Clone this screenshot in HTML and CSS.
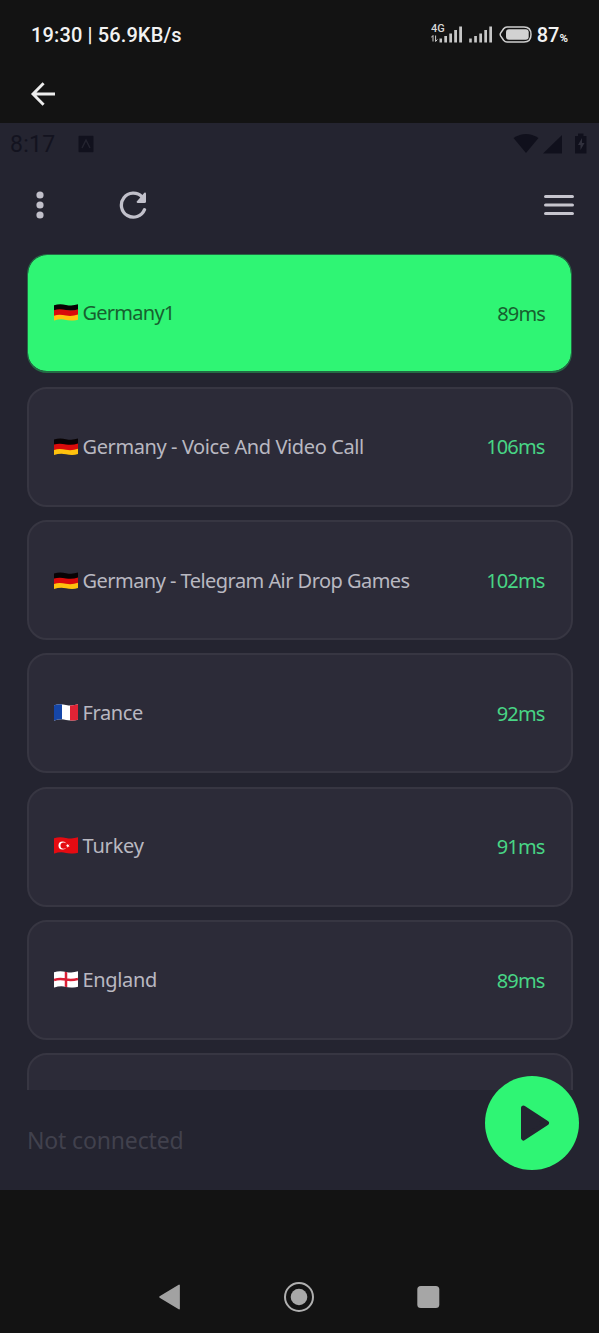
FILE: index.html
```
<!DOCTYPE html>
<html lang="en">
<head>
<meta charset="utf-8">
<title>Servers</title>
<link rel="stylesheet" href="styles.css">
</head>
<body>
<svg class="defs" aria-hidden="true">
  <defs>
    <clipPath id="wave"><path d="M0 1.600C4 .2 8 .4 12 1.200S20 2 24 .6V16C20 17.400 16 17.200 12 16.200S4 15.600 0 17Z"/></clipPath>
    <symbol id="de" viewBox="0 0 24 18"><g clip-path="url(#wave)"><path fill="#080304" d="M0 0H24V7H0Z"/><path fill="#d90b0b" d="M0 6.600C4 5.200 8 5.600 12 6.400S20 7 24 5.600V13H0Z"/><path fill="#ffc20e" d="M0 12C4 10.600 8 11 12 11.800S20 12.200 24 10.800V18H0Z"/></g></symbol>
    <symbol id="fr" viewBox="0 0 24 18"><g clip-path="url(#wave)"><path fill="#fff" d="M0 0H24V18H0Z"/><path fill="#1546a8" d="M0 0H8V18H0Z"/><path fill="#e02335" d="M16 0H24V18H16Z"/></g></symbol>
    <symbol id="tr" viewBox="0 0 24 18"><g clip-path="url(#wave)"><path fill="#e50b12" d="M0 0H24V18H0Z"/><circle cx="8.500" cy="8.900" r="4" fill="#fff"/><circle cx="9.700" cy="8.900" r="3.200" fill="#e50b12"/><path fill="#fff" d="M11.600 9l1.500-.5V7l1 1.200 1.500-.4-.9 1.200.9 1.200-1.500-.4-1 1.200V9.500Z"/></g></symbol>
    <symbol id="en" viewBox="0 0 24 18"><g clip-path="url(#wave)"><path fill="#fff" d="M0 0H24V18H0Z"/><path fill="none" stroke="#d91f35" stroke-width="2.500" d="M12 0V18M0 9.300C4 8 8 8.200 12 8.900S20 9.400 24 8.200"/></g></symbol>
  </defs>
</svg>

<header class="statusbar">
  <span class="clock">19:30 | 56.9KB/s</span>
  <svg class="signals" viewBox="0 0 102 24">
    <text class="net" x="0" y="9">4G</text>
    <g fill="none" stroke="#cfcfcf" stroke-width="1"><path d="M2 18.500V12.500M.2 14.500L2 12.500M4.600 12.500V18.500M6.400 16.500L4.600 18.500"/></g>
    <g fill="#c6c6c6"><path d="M8.500 15.500h2.500V19.500H8.500zM13.300 13h2.700v6.500h-2.700zM18.300 10.500h2.700v9h-2.700zM23.200 7h2.800V19.500h-2.800zM28.200 3.500h2.800V19.500h-2.800z"/><path d="M38.200 15.500h2.600v4h-2.600zM43.200 13h2.700v6.500h-2.700zM48.300 10.500H51v9h-2.700zM53.300 7h2.700V19.500h-2.700zM58.300 3.500H61V19.500h-2.700z"/></g>
    <path d="M76 4H93Q100 4 100 11.500T93 19H76Q74 19 72.600 17.200L69.600 12.800Q68.800 11.500 69.600 10.200L72.600 5.800Q74 4 76 4Z" fill="none" stroke="#cfcfcf" stroke-width="1.500"/>
    <rect x="75" y="6.200" width="22.700" height="10.600" rx="3" fill="#d2d2d2"/>
  </svg>
  <span class="battery">87<small>%</small></span>
</header>

<nav class="appbar">
  <svg class="back" viewBox="0 0 26 26"><path d="M13.600 2.200L3 13L13.600 23.800M3 13H25" fill="none" stroke="#ececec" stroke-width="2.900"/></svg>
</nav>

<main class="screen">
  <div class="innerbar">
    <span class="time">8:17</span>
    <svg class="badge" viewBox="0 0 16 18"><rect x=".5" y=".8" width="15" height="16.500" rx="1" fill="#11111d"/><path d="M4 13L8 5l4 8" fill="none" stroke="#242430" stroke-width="1.400"/></svg>
    <svg class="device" viewBox="0 0 78 22"><g fill="#10101c"><path d="M.5 5Q13 -3 25.500 5L13 20Z"/><path d="M49 2V20.500H30Z"/><path d="M62 3h3V.5h5.500V3h3v17.500H62Z"/></g><path d="M69 5l-4 7h2.500v5l4-7H69Z" fill="#30303c"/></svg>
  </div>
  <div class="toolbar">
    <svg class="more" viewBox="0 0 8 28"><g fill="#c1c0ca"><circle cx="4" cy="4" r="3.600"/><circle cx="4" cy="14" r="3.600"/><circle cx="4" cy="24" r="3.600"/></g></svg>
    <svg class="refresh" viewBox="0 0 30 30"><path d="M26.500 19.700A12 12 0 1 1 24 6.800" fill="none" stroke="#c1c0ca" stroke-width="3.300" stroke-linecap="round"/><path d="M26.300 2.700Q28 2 28 4V11.500Q28 13 26.500 13H19.700Q18 12.800 19 11.300Z" fill="#c1c0ca"/></svg>
    <svg class="menu" viewBox="0 0 30 22"><path d="M1.600 2.500H28.400M1.600 11H28.400M1.600 19.500H28.400" stroke="#c6c5ce" stroke-width="3.200" stroke-linecap="round"/></svg>
  </div>
  <section class="servers">
    <div class="card active raised"><svg class="flag"><use href="#de"/></svg><span class="name n1">Germany1</span><span class="ping">89ms</span></div>
    <div class="card"><svg class="flag"><use href="#de"/></svg><span class="name n2">Germany - Voice And Video Call</span><span class="ping">106ms</span></div>
    <div class="card"><svg class="flag"><use href="#de"/></svg><span class="name n3">Germany - Telegram Air Drop Games</span><span class="ping">102ms</span></div>
    <div class="card raised"><svg class="flag"><use href="#fr"/></svg><span class="name n4">France</span><span class="ping">92ms</span></div>
    <div class="card raised"><svg class="flag"><use href="#tr"/></svg><span class="name n5">Turkey</span><span class="ping">91ms</span></div>
    <div class="card raised"><svg class="flag"><use href="#en"/></svg><span class="name n6">England</span><span class="ping">89ms</span></div>
    <div class="card"></div>
  </section>
  <footer class="footer">
    <span class="state">Not connected</span>
    <button class="play" aria-label="Connect"><svg viewBox="0 0 94 94"><path d="M38.500 32L61.500 47L38.500 62Z" fill="#242430" stroke="#242430" stroke-width="5" stroke-linejoin="round"/></svg></button>
  </footer>
</main>

<nav class="navbar">
  <svg viewBox="0 0 32 32"><path d="M24.100 4.300V27.700L5 16Z" fill="#a2a2a2" stroke="#a2a2a2" stroke-width="1.500" stroke-linejoin="round"/></svg>
  <svg viewBox="0 0 32 32"><circle cx="15" cy="16" r="14" fill="none" stroke="#b0b0b0" stroke-width="2"/><circle cx="15" cy="16" r="8.300" fill="#a8a8a8"/></svg>
  <svg viewBox="0 0 32 32"><rect x="5.300" y="5" width="22" height="22" rx="3.500" fill="#a6a6a6"/></svg>
</nav>
</body>
</html>
```
FILE: styles.css
```
* { box-sizing: border-box; }
body { margin: 0; width: 599px; height: 1333px; overflow: hidden; background: #131313; font-family: "Noto Sans", sans-serif; display: flex; flex-direction: column; }
svg { display: block; flex: none; }
.defs { width: 0; height: 0; position: absolute; }
.statusbar { height: 69px; display: flex; align-items: center; padding: 0 31px; font-family: Roboto, sans-serif; font-weight: 500; font-size: 20px; color: #f2f2f2; white-space: nowrap; }
.clock { margin-right: auto; letter-spacing: .13px; }
.signals { width: 102px; height: 24px; margin-right: 4px; }
.net { font: 500 11px Roboto, sans-serif; fill: #d8d8d8; }
.battery small { font-size: 11.500px; font-weight: 700; }
.appbar { height: 54px; padding: 12px 30px; }
.back { width: 26px; height: 26px; }
.screen { height: 1067px; background: #242430; display: flex; flex-direction: column; }
.innerbar { height: 42px; padding: 0 10px; display: flex; align-items: center; font-family: Roboto, sans-serif; font-size: 23px; color: #13131f; }
.time { letter-spacing: .25px; }
.badge { width: 16px; height: 18px; margin-left: 23px; }
.device { width: 78px; height: 22px; margin-left: auto; margin-right: -2px; }
.toolbar { height: 88.500px; padding: 0 25px 8.500px 36px; display: flex; align-items: center; }
.more { width: 8px; height: 28px; }
.refresh { width: 30px; height: 30px; margin-left: 74px; }
.menu { width: 30px; height: 22px; margin-left: auto; }
.servers { height: 836.500px; padding: 0 26.500px; display: flex; flex-direction: column; gap: 13.330px; overflow: hidden; }
.card { flex: 0 0 120px; display: flex; align-items: center; padding: 1px 26px 0 25px; border: 2px solid #373642; border-radius: 20px; background: #2c2b38; color: #b9b8c1; font-size: 20px; line-height: 28px; white-space: nowrap; }
.active { flex-basis: 119px; margin: 0 .5px 1px; padding: 2px 26px 0 25.500px; border: 1px solid #246b45; border-bottom-width: 2px; background: #2ff574; background-clip: padding-box; color: #17602f; }
.flag { width: 24px; height: 18px; margin-right: 5px; }
.n1 { letter-spacing: -.75px; }
.n2 { letter-spacing: -.4px; }
.n3 { letter-spacing: -.54px; }
.n4 { letter-spacing: -.4px; }
.n5 { letter-spacing: -.2px; }
.n6 { letter-spacing: -.35px; }
.ping { margin-left: auto; color: #48d585; letter-spacing: -.85px; }
.active .ping { color: #17602f; }
.raised .name, .raised .flag { transform: translateY(-1.300px); }
.footer { height: 100px; padding: 0 20px 0 27px; display: flex; align-items: center; justify-content: space-between; }
.state { color: #41414d; font-size: 23px; letter-spacing: -.15px; }
.play { width: 94px; height: 94px; margin: -34px 0 0; padding: 0; border: 0; border-radius: 50%; background: #2ff574; position: relative; }
.navbar { height: 143px; padding: 0 155px 20.500px; display: flex; justify-content: space-between; align-items: flex-end; }
.navbar svg { width: 32px; height: 32px; }
```
